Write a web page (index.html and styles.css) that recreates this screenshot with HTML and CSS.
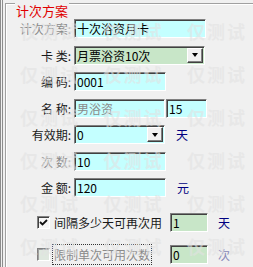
FILE: index.html
```html
<!doctype html>
<html lang="zh">
  <head>
    <meta charset="UTF-8" />
    <title>计次方案</title>
    <link rel="stylesheet" href="styles.css">
  </head>
  <body>
    <div class="window">
      <div class="group">
        <div class="group-title">计次方案</div>

        <div class="form">
          <span class="lbl dim">计次方案:</span>
          <div class="cell"><input class="box cyan w-132" value="十次浴资月卡" readonly /></div>

          <span class="lbl">卡 类:</span>
          <div class="cell">
            <div class="box green combo w-131"><span class="combo-text">月票浴资10次</span><span class="combo-btn"></span></div>
          </div>

          <span class="lbl">编 码:</span>
          <div class="cell"><input class="box cyan w-92" value="0001" readonly /></div>

          <span class="lbl">名 称:</span>
          <div class="cell pair">
            <input class="box cyan w-91 muted" value="男浴资" readonly />
            <input class="box cyan w-41" value="15" readonly />
          </div>

          <span class="lbl">有效期:</span>
          <div class="cell">
            <div class="box cyan combo w-91"><span class="combo-text">0</span><span class="combo-btn"></span></div>
            <span class="unit">天</span>
          </div>

          <span class="lbl dim">次 数:</span>
          <div class="cell"><input class="box cyan w-92" value="10" readonly /></div>

          <span class="lbl">金 额:</span>
          <div class="cell">
            <input class="box cyan w-92" value="120" readonly />
            <span class="unit">元</span>
          </div>
        </div>

        <div class="checks">
          <div class="check-row">
            <span class="check">
              <svg width="9" height="9" viewBox="0 0 9 9"><path d="M1 4 L3.5 6.5 L8 2" fill="none" stroke="#111" stroke-width="1.8" /></svg>
            </span>
            <span class="check-text">间隔多少天可再次用</span>
            <input class="box green w-38" value="1" readonly />
            <span class="unit">天</span>
          </div>
          <div class="check-row">
            <span class="check disabled"></span>
            <span class="check-text"><span class="focus">限制单次可用次数</span></span>
            <input class="box green w-38" value="0" readonly />
            <span class="unit off">次</span>
          </div>
        </div>
      </div>

      <!-- image host watermark -->
      <div class="watermark">
        <div class="wm-row"><span>仅测试</span><span>仅测试</span><span>仅测试</span></div>
        <div class="wm-row"><span>仅测试</span><span>仅测试</span><span>仅测试</span></div>
        <div class="wm-row"><span>仅测试</span><span>仅测试</span><span>仅测试</span></div>
        <div class="wm-row"><span>仅测试</span><span>仅测试</span><span>仅测试</span></div>
        <div class="wm-row"><span>仅测试</span><span>仅测试</span><span>仅测试</span></div>
        <div class="wm-row"><span>仅测试</span><span>仅测试</span><span>仅测试</span></div>
      </div>
    </div>
  </body>
</html>
```

FILE: styles.css
```css
body {
  margin: 0;
  background: #f0f0f0;
  font-family: "Noto Sans CJK SC", "Noto Sans", sans-serif;
  font-size: 12px;
  color: #1a1a1a;
  overflow: hidden;
}
.window {
  position: relative;
  height: 267px;
  overflow: hidden;
  border-left: 3px double #8c8c8c;
  padding-left: 2px;
}
.group {
  margin-top: 3px;
  height: 264px;
  box-sizing: border-box;
  border-top: 1px solid #a0a0a0;
  border-left: 1px solid #a0a0a0;
  box-shadow: inset 1px 1px #fff;
}
.group-title {
  width: max-content;
  margin: -1px 0 0 9px;
  padding: 0 1px;
  background: #f0f0f0;
  color: #e00000;
  font-size: 13px;
  line-height: 15px;
}
.form {
  margin-top: 1px;
  display: grid;
  grid-template-columns: 65px auto;
  grid-auto-rows: 19px;
  column-gap: 3px;
  row-gap: 7.5px;
}
.lbl {
  text-align: right;
  line-height: 19px;
  white-space: pre;
}
.dim {
  color: #8a8a8a;
}
.cell {
  display: flex;
  align-items: center;
  gap: 11px;
}
.cell.pair {
  gap: 1px;
}
.box {
  box-sizing: border-box;
  height: 19px;
  margin: 0;
  padding: 0 0 0 2px;
  border: 1px solid;
  border-color: #808080 #fff #fff #808080;
  box-shadow: inset 1px 1px #404040;
  font: inherit;
  color: #000;
  outline: none;
}
.cyan {
  background: #c4ffff;
}
.green {
  background: #c8e6c8;
}
.muted {
  color: #8a8a8a;
}
.w-132 { width: 132px; }
.w-131 { width: 131px; }
.w-92 { width: 92px; }
.w-91 { width: 91px; }
.w-41 { width: 41px; }
.w-38 { width: 38px; }
.combo {
  display: flex;
  align-items: center;
  padding-right: 1px;
}
.combo-text {
  flex: 1;
  line-height: 17px;
}
.combo-btn {
  box-sizing: border-box;
  width: 16px;
  height: 15px;
  display: flex;
  align-items: center;
  justify-content: center;
  background: #f0f0f0;
  border: 1px solid;
  border-color: #fff #404040 #404040 #fff;
  box-shadow: inset -1px -1px #808080;
}
.combo-btn::after {
  content: "";
  border-left: 3.5px solid transparent;
  border-right: 3.5px solid transparent;
  border-top: 4px solid #000;
}
.unit {
  color: #000080;
}
.unit.off {
  color: #8888b8;
}
.checks {
  margin-top: 16px;
  display: flex;
  flex-direction: column;
  gap: 13px;
}
.check-row {
  display: flex;
  align-items: center;
  height: 19px;
  padding-left: 31px;
}
.check {
  box-sizing: border-box;
  width: 13px;
  height: 13px;
  display: flex;
  align-items: center;
  justify-content: center;
  background: #f6f6f6;
  border: 1px solid;
  border-color: #808080 #fff #fff #808080;
  box-shadow: inset 1px 1px #404040;
}
.check.disabled {
  background: #dfe8df;
  box-shadow: inset 1px 1px #a0a0a0;
}
.check-text {
  width: 116px;
  margin-left: 4px;
  white-space: nowrap;
}
.focus {
  color: #8a8a8a;
  outline: 1px dotted #333;
  outline-offset: 1px;
}
.check-row .unit {
  margin-left: 10px;
}
.watermark {
  position: absolute;
  inset: 0;
  padding: 21px 0 0 17px;
  display: flex;
  flex-direction: column;
  gap: 23px;
  pointer-events: none;
}
.wm-row {
  display: flex;
  gap: 23.5px;
  font-size: 18px;
  font-weight: bold;
  letter-spacing: 2px;
  line-height: 20px;
  white-space: nowrap;
  color: rgba(226, 226, 226, 0.6);
}
```
